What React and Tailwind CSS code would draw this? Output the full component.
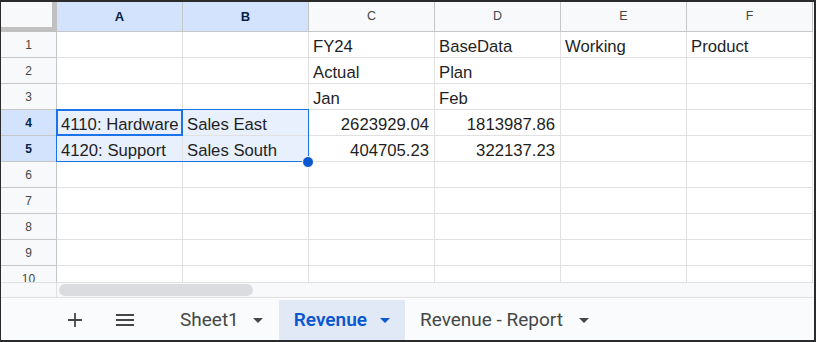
import React from "react";

const cols = ["A", "B", "C", "D", "E", "F"];

const data = {
  1: { C: "FY24", D: "BaseData", E: "Working", F: "Product" },
  2: { C: "Actual", D: "Plan" },
  3: { C: "Jan", D: "Feb" },
  4: { A: "4110: Hardware", B: "Sales East", C: "2623929.04", D: "1813987.86" },
  5: { A: "4120: Support", B: "Sales South", C: "404705.23", D: "322137.23" },
};

const numeric = (v) => /^[0-9.]+$/.test(v);

const Caret = ({ className }) => (
  <svg width="10" height="5" viewBox="0 0 10 5" className={className}>
    <path d="M0 0h10L5 5z" fill="currentColor" />
  </svg>
);

const Row = ({ n }) => {
  const sel = n === 4 || n === 5;
  return (
    <div className="flex h-[26px] shrink-0">
      <div
        className={`w-[56px] shrink-0 flex items-center justify-center text-[12px] border-r border-b border-[#c4c7c5] ${
          sel ? "bg-[#d3e3fd] font-bold text-[#041e49]" : "bg-[#f8f9fa] text-[#444746]"
        }`}
      >
        {n}
      </div>
      {cols.map((c) => {
        const v = data[n]?.[c] || "";
        const inSel = sel && (c === "A" || c === "B");
        return (
          <div
            key={c}
            className={`w-[126px] shrink-0 flex items-end pb-[1px] border-r border-b border-[#e1e1e1] text-[16.7px] leading-[18px] text-[#1f1f1f] whitespace-nowrap overflow-hidden ${
              numeric(v) ? "justify-end pr-[5px]" : "pl-[4px]"
            } ${inSel ? "bg-[#e8f0fe]" : "bg-white"}`}
          >
            {v}
          </div>
        );
      })}
    </div>
  );
};

export default function App() {
  return (
    <div
      className="w-[816px] h-[342px] overflow-hidden bg-white border-[#2b2b2b] border-t-2 border-l border-r-2 border-b-2 flex flex-col"
      style={{ fontFamily: "'Liberation Sans', Arial, sans-serif" }}
    >
      {/* Column header */}
      <div className="flex h-[30px] shrink-0">
        <div className="w-[56px] shrink-0 bg-[#f8f9fa] border-r-[5px] border-b-[5px] border-[#c0c0c0]" />
        {cols.map((c) => {
          const sel = c === "A" || c === "B";
          return (
            <div
              key={c}
              className={`w-[126px] shrink-0 flex items-center justify-center text-[12.5px] border-r border-b border-[#c4c7c5] ${
                sel ? "bg-[#d3e3fd] font-bold text-[#041e49] text-[13px]" : "bg-[#f8f9fa] text-[#444746]"
              }`}
            >
              {c}
            </div>
          );
        })}
      </div>

      {/* Grid body */}
      <div className="relative h-[250px] shrink-0 overflow-hidden">
        {[1, 2, 3, 4, 5, 6, 7, 8, 9, 10].map((n) => (
          <Row key={n} n={n} />
        ))}
        {/* Selection range A4:B5 */}
        <div className="absolute left-[55px] top-[77px] w-[253px] h-[53px] border border-[#1a73e8] pointer-events-none" />
        {/* Active cell */}
        <div className="absolute left-[55px] top-[77px] w-[127px] h-[27px] border-2 border-[#1a73e8] pointer-events-none" />
        {/* Fill handle */}
        <div className="absolute left-[301px] top-[124px] w-[12px] h-[12px] rounded-full bg-[#0b57d0] border border-white" />
      </div>

      {/* Horizontal scrollbar */}
      <div className="flex h-[15px] shrink-0 bg-[#f8f9fa] items-center border-t border-[#e1e1e1]">
        <div className="w-[56px] shrink-0 h-full border-r border-[#e1e1e1]" />
        <div className="ml-[2px] w-[194px] h-[12px] rounded-full bg-[#dadce0]" />
      </div>

      {/* Sheet tabs */}
      <div
        className="flex-1 flex items-stretch bg-[#f9fbfd] border-t border-[#e1e1e1] text-[19px] text-[#444746] pt-[2px]"
        style={{ fontFamily: "Roboto, 'Open Sans', sans-serif" }}
      >
        <div className="w-[56px] shrink-0" />
        <div className="w-[36px] flex items-center justify-center text-[#444746]">
          <svg width="14" height="14" viewBox="0 0 14 14">
            <path d="M7 0v14M0 7h14" stroke="currentColor" strokeWidth="1.8" />
          </svg>
        </div>
        <div className="w-[14px]" />
        <div className="w-[36px] flex items-center justify-center text-[#444746]">
          <svg width="18" height="12" viewBox="0 0 18 12">
            <path d="M0 1h18M0 6h18M0 11h18" stroke="currentColor" strokeWidth="1.8" />
          </svg>
        </div>
        <div className="flex items-center gap-[14px] pl-[37px] pr-[16px]">
          <span>Sheet1</span>
          <Caret />
        </div>
        <div className="flex items-center gap-[13px] px-[15px] bg-[#e1e9f7] text-[#0b57d0] font-semibold">
          <span>Revenue</span>
          <Caret />
        </div>
        <div className="flex items-center gap-[16px] px-[15px]">
          <span>Revenue - Report</span>
          <Caret />
        </div>
      </div>
    </div>
  );
}
